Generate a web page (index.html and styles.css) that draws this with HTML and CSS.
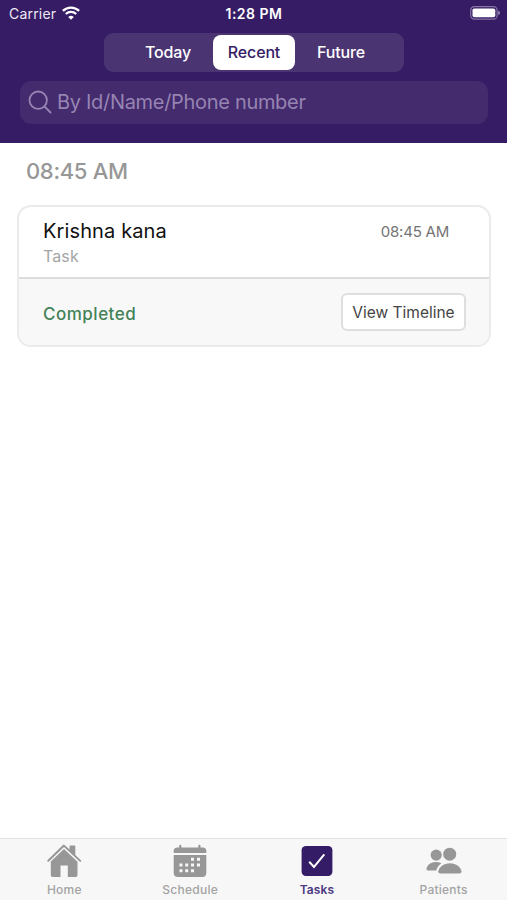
FILE: index.html
```html
<!DOCTYPE html>
<html lang="en">
<head>
<meta charset="utf-8">
<title>Tasks</title>
<link rel="stylesheet" href="styles.css">
</head>
<body>
<div class="app">
  <header class="header">
    <div class="status">
      <div class="carrier"><span>Carrier</span>
        <svg class="wifi" width="18" height="14" viewBox="0 0 18 14" fill="none" stroke="#fff" stroke-width="2.3"><path d="M.9 4.9a11.7 11.7 0 0 1 16.2 0M3.8 8a7.5 7.5 0 0 1 10.4 0"/><path d="M9 13.8 6.2 11a4 4 0 0 1 5.6 0z" fill="#fff" stroke="none"/></svg>
      </div>
      <div class="clock">1:28 PM</div>
      <svg class="battery" width="31" height="14" viewBox="0 0 31 14"><rect x=".7" y=".7" width="26.4" height="12.4" rx="3.6" fill="none" stroke="#8473a3" stroke-width="1.2"/><rect x="2.5" y="2.5" width="22.8" height="8.8" rx="1.8" fill="#fff"/><path d="M28.2 4.7q1.8.6 1.8 2.2t-1.8 2.2z" fill="#9c8eb5"/></svg>
    </div>
    <nav class="segments">
      <span class="segment today">Today</span>
      <span class="segment selected">Recent</span>
      <span class="segment future">Future</span>
    </nav>
    <div class="search">
      <svg width="24" height="24" viewBox="0 0 24 24" fill="none" stroke="#9784b2" stroke-width="1.8" stroke-linecap="round"><circle cx="10.2" cy="10.2" r="8.7"/><path d="m16.5 16.5 6 6"/></svg>
      <span>By Id/Name/Phone number</span>
    </div>
  </header>
  <main class="content">
    <h1 class="group-time">08:45 AM</h1>
    <article class="card">
      <div class="card-top">
        <div><div class="name">Krishna kana</div><div class="type">Task</div></div>
        <div class="time">08:45 AM</div>
      </div>
      <div class="card-bottom">
        <span class="state">Completed</span>
        <button class="timeline">View Timeline</button>
      </div>
    </article>
  </main>
  <nav class="tabs">
    <div class="tab home">
      <svg width="36" height="34" viewBox="0 0 36 34" fill="#979797"><path d="M18 .4 23.6 5.6V2.1q0-.6.6-.6h4.5q.6 0 .6.6v8.8l5.6 5.3q.7.7.1 1.4-.7.7-1.4 0L18 2.9 2.9 17.5q-.7.7-1.4 0-.6-.7.1-1.4L16.7 1.2Q17.3.5 18 .4z"/><path d="M18 4.9 31.5 17.8v13.4q0 1.8-1.8 1.8h-7.9V21.4h-7.3V33H6.6q-1.8 0-1.8-1.8V17.6z"/></svg>
      <span>Home</span>
    </div>
    <div class="tab schedule">
      <svg width="36" height="34" viewBox="0 0 36 34" fill="#979797"><path d="M1.7 9.1V7Q1.7 3.4 5.2 3.4h2V2q0-1.2 1.1-1.2T9.4 2v1.4h16.9V2q0-1.2 1.1-1.2T28.5 2v1.4h2.3q3.5 0 3.5 3.6v2.1z"/><path d="M1.7 11h32.6v17.8q0 4.2-4.1 4.2H5.8q-4.1 0-4.1-4.2z"/><g fill="#f7f7f7"><path d="M19 13.8h3v3h-3zM25 13.8h3v3h-3zM7.5 19.5h3v3h-3zM13.2 19.5h3v3h-3zM19 19.5h3v3h-3zM25 19.5h3v3h-3zM7.5 25.3h3v3h-3zM13.2 25.3h3v3h-3zM19 25.3h3v3h-3z"/></g></svg>
      <span>Schedule</span>
    </div>
    <div class="tab tasks">
      <svg width="36" height="34" viewBox="0 0 36 34"><rect x="2.6" y="2" width="30.8" height="30" rx="4.2" fill="#351c67"/><path d="m10.2 17.8 4.8 5.1L25.3 10.4" fill="none" stroke="#fff" stroke-width="2"/></svg>
      <span>Tasks</span>
    </div>
    <div class="tab patients">
      <svg width="36" height="34" viewBox="0 0 36 34" fill="#979797"><circle cx="10.2" cy="11.1" r="5.6"/><circle cx="23.7" cy="10.2" r="6.5"/><path d="M2 26.6Q.4 26.6.5 25C1.2 20.9 4.7 18 9.6 18q3.6 0 5.8 1.3-4 2.6-5.1 7.3z"/><path d="M14 29.4q-2 0-1.8-1.8C13.2 22.9 17.4 19.2 23.9 19.2S34.7 22.9 35.5 27.6q.1 1.8-1.8 1.8z"/></svg>
      <span>Patients</span>
    </div>
  </nav>
</div>
</body>
</html>
```

FILE: styles.css
```css
* { box-sizing: border-box; }
body { margin: 0; background: #fff; font-family: Inter, "Liberation Sans", sans-serif; }
svg { display: block; flex: none; }
.app { width: 507px; height: 900px; display: flex; flex-direction: column; overflow: hidden; }
.header { height: 142.5px; background: #351c65; color: #fff; display: flex; flex-direction: column; flex: none; }
.status { height: 33px; padding: 6px 6px 0 9px; display: grid; grid-template-columns: 1fr auto 1fr; align-items: start; line-height: 16px; }
.carrier { display: flex; gap: 6px; font-size: 14px; letter-spacing: .2px; color: #eee9f4; }
.clock { font-size: 14px; font-weight: 600; letter-spacing: .5px; margin-right: 2px; }
.battery { justify-self: end; }
.segments { width: 300px; height: 39px; margin-left: 104px; padding: 2px 0; border-radius: 9px; background: #4b3472; display: flex; flex: none; }
.segment { height: 35px; line-height: 35px; font-size: 16px; font-weight: 500; letter-spacing: -.15px; white-space: nowrap; }
.today { width: 109px; padding-left: 41px; }
.selected { width: 82px; text-align: center; background: #fff; color: #351c65; border-radius: 8px; }
.future { padding-left: 22px; }
.search { width: 468px; height: 43.5px; margin: 8.5px 0 0 20px; padding-left: 8px; border-radius: 11px; background: #432b6e; color: #9784b2; display: flex; align-items: center; gap: 5px; font-size: 20px; letter-spacing: -.31px; }
.content { flex: 1; padding: 0 16px 0 17px; }
.group-time { margin: 0 0 0 9px; height: 62.5px; padding-top: 16px; font-size: 22px; line-height: 24px; font-weight: 500; color: #979797; letter-spacing: -.33px; }
.card { height: 142px; border: 2px solid #ebebeb; border-radius: 14px; overflow: hidden; }
.card-top { height: 72px; padding: 12px 40px 0 24px; border-bottom: 2px solid #dcdcdc; display: flex; justify-content: space-between; }
.name { font-size: 20px; line-height: 24px; color: #111; letter-spacing: .12px; }
.type { margin-top: 2px; font-size: 16px; line-height: 22px; color: #a5a5a5; letter-spacing: .1px; }
.time { font-size: 15px; line-height: 26px; color: #747474; letter-spacing: -.22px; }
.card-bottom { height: 66px; padding: 0 23px 0 24px; background: #f8f8f8; display: flex; align-items: center; justify-content: space-between; }
.state { font-size: 17px; font-weight: 500; color: #438259; letter-spacing: .5px; margin-top: 3px; }
.timeline { width: 125px; height: 38px; padding: 0; border: 2px solid #dedede; border-radius: 6px; background: #fff; color: #444; font: 400 15.5px Inter, sans-serif; letter-spacing: 0; white-space: nowrap; }
.tabs { height: 62px; flex: none; padding-top: 5px; border-top: 1px solid #e2e2e2; background: #f7f7f7; display: grid; grid-template-columns: 1fr 1fr 1fr 1fr; }
.tab { display: flex; flex-direction: column; align-items: center; font-size: 12px; line-height: 15px; font-weight: 500; color: #a3a3a3; letter-spacing: .25px; gap: 4px; }
.home { padding-left: 2px; }
.tasks { color: #4b3780; font-weight: 600; letter-spacing: .1px; }
```
